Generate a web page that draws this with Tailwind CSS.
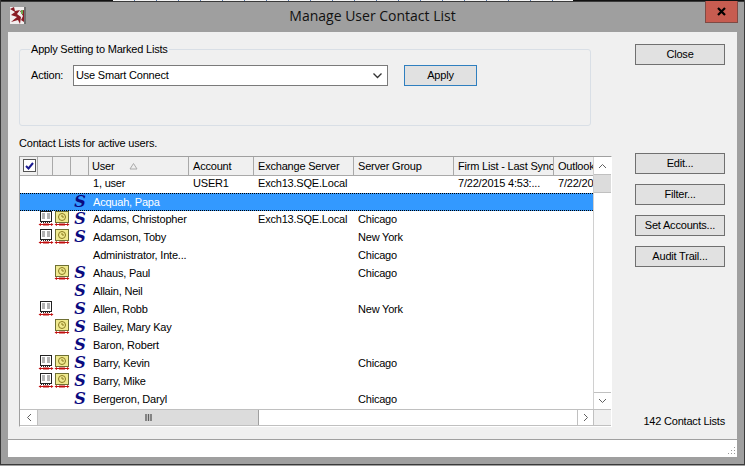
<!DOCTYPE html>
<html lang="en">
<head>
  <meta charset="UTF-8" />
  <title>Manage User Contact List</title>
  <script src="https://cdn.jsdelivr.net/npm/@tailwindcss/browser@4"></script>
</head>
<body class="w-[745px] h-[466px] overflow-hidden bg-[#9f9f9f] font-['Liberation_Sans',sans-serif] text-[11px] tracking-[-0.2px] text-black">
  <svg width="0" height="0" class="absolute">
    <symbol id="book" viewBox="0 0 16 16">
      <rect x="2.500" y="0.500" width="11" height="10" fill="#fff" stroke="#222"/>
      <path d="M4 3h3M4 5h3M4 7h3M9 3h3M9 5h3M9 7h3" stroke="#666"/>
      <path d="M3 11.500h10" stroke="#222" stroke-dasharray="1 1"/>
      <path d="M2 13.500h12M6 12v3M8 12v3M10 12v3" stroke="#c01010"/>
      <path d="M3 12l-2.500 1.500 2.500 1.500zM13 12l2.500 1.500-2.500 1.500z" fill="#c01010"/>
    </symbol>
    <symbol id="clock" viewBox="0 0 16 16">
      <rect x="1.500" y="0.500" width="13" height="11" fill="#f0ea90" stroke="#6f7034"/>
      <circle cx="8" cy="6" r="3.500" fill="none" stroke="#8a7a20"/>
      <path d="M8 4v2h2" stroke="#8a7a20" fill="none"/>
      <path d="M2 13.500h12M6 12v3M8 12v3M10 12v3" stroke="#c01010"/>
      <path d="M3 12l-2.500 1.500 2.500 1.500zM13 12l2.500 1.500-2.500 1.500z" fill="#c01010"/>
    </symbol>
  </svg>

  <!-- Title bar -->
  <div class="relative h-[32px] border-x border-[#3a3a3a] flex flex-col">
    <div class="h-[1px] bg-[#111] flex shrink-0">
      <div class="ml-[112px] w-[460px] bg-[repeating-linear-gradient(90deg,#f4f4f4_0,#f4f4f4_21px,#5577aa_21px,#5577aa_22px)]"></div>
    </div>
    <div class="h-[1px] bg-[#3a3a3a] shrink-0"></div>
    <div class="flex-1 flex items-center justify-center pb-[4px]">
      <div class="text-[14px] tracking-normal font-['Open_Sans',sans-serif] text-[#111]">Manage User Contact List</div>
    </div>
    <svg class="absolute left-[9px] top-[7px]" width="16" height="17" viewBox="0 0 16 17">
      <rect width="16" height="17" fill="#f2eeee"/>
      <path d="M0 2l5 3-4 3 6 2-6 5 7-2 2 4 1-7-4-3 3-4-5 1-1-4zM10 4l3 5-2 4 3 2V3z" fill="#8a1c24"/>
      <rect x="11" y="3" width="2" height="4" fill="#6fa84f"/>
      <rect x="14" y="0" width="2" height="17" fill="#6f6f6f"/>
    </svg>
    <div class="absolute left-[704px] top-[1px] w-[33px] h-[22px] bg-[#c75c50] border border-[#7e4a44] border-t-0 flex items-center justify-center">
      <svg width="9" height="9" viewBox="0 0 9 9"><path d="M1 1l7 7M8 1l-7 7" stroke="#000" stroke-width="2.200"/></svg>
    </div>
  </div>

  <!-- Client area -->
  <div class="border-x border-[#3a3a3a] h-[433px] border-b">
  <div class="ml-[7px] w-[729px] h-[425px] bg-[#f0f0f0] flex flex-col">
    <div class="h-[407px] flex pl-[11px] pt-[12px]">
      <!-- Left column -->
      <div class="w-[616px] flex flex-col">
        <fieldset class="w-[572px] h-[83px] -mt-[1px] border border-[#d9dfe6] rounded-[3px] pl-[11px] m-0">
          <legend class="px-[1px] -ml-[1px] leading-[13px]">Apply Setting to Marked Lists</legend>
          <div class="flex items-center mt-[9px]">
            <span class="w-[42px]">Action:</span>
            <div class="w-[315px] h-[21px] bg-white border border-[#7a7a7a] flex items-center justify-between pl-[2px] pr-[5px]">
              <span>Use Smart Connect</span>
              <svg width="9" height="6" viewBox="0 0 9 6"><path d="M0.500 0.500l4 4 4-4" stroke="#333" stroke-width="1.300" fill="none"/></svg>
            </div>
            <button class="ml-[16px] w-[73px] h-[21px] bg-[#e1e1e1] border border-[#2f7fbf]">Apply</button>
          </div>
        </fieldset>
        <div class="mt-[10px] leading-[14px]">Contact Lists for active users.</div>

        <!-- List view -->
        <div class="relative mt-[6px] w-[593px] h-[271px] border border-[#a0a0a0] border-r-white border-b-white bg-white overflow-hidden">
          <div class="w-[573px] h-[252px] overflow-hidden">
            <div class="grid grid-cols-[18px_15px_18px_18px_100px_65px_100px_100px_100px_39px] auto-rows-[18px] whitespace-nowrap">
              <!-- Header -->
              <div class="grid grid-cols-subgrid col-span-full h-[18px] bg-[#f0f0f0]">
                <div class="border-r border-b border-[#a9a9a9] flex items-center justify-center pl-[1px]"><span class="w-[13px] h-[13px] bg-white border border-[#555] flex items-center justify-center"><svg width="9" height="8" viewBox="0 0 9 8"><path d="M1 4l2.500 2.500L8 1" stroke="#1a1a90" stroke-width="2" fill="none"/></svg></span></div>
                <div class="border-r border-b border-[#a9a9a9]"></div>
                <div class="border-r border-b border-[#a9a9a9]"></div>
                <div class="border-r border-b border-[#a9a9a9]"></div>
                <div class="border-r border-b border-[#a9a9a9] pl-[3px] pt-[1px] flex items-center">User<svg class="ml-[15px]" width="9" height="7" viewBox="0 0 9 7"><path d="M4.500 0.500L8 6H1z" fill="none" stroke="#aaa"/></svg></div>
                <div class="border-r border-b border-[#a9a9a9] pl-[4px] pt-[1px] flex items-center">Account</div>
                <div class="border-r border-b border-[#a9a9a9] pl-[4px] pt-[1px] flex items-center">Exchange Server</div>
                <div class="border-r border-b border-[#a9a9a9] pl-[4px] pt-[1px] flex items-center">Server Group</div>
                <div class="border-r border-b border-[#a9a9a9] pl-[4px] pt-[1px] flex items-center overflow-hidden">Firm List - Last Sync</div>
                <div class="border-b border-[#a9a9a9] pl-[4px] pt-[1px] flex items-center overflow-hidden">Outlook</div>
              </div>
              <!-- Rows -->
              <div class="grid grid-cols-subgrid col-span-full items-center pb-[2px]">
                <span class="col-start-5 pl-[4px]">1, user</span><span class="pl-[4px]">USER1</span><span class="pl-[4px]">Exch13.SQE.Local</span><span></span><span class="pl-[4px]">7/22/2015 4:53:...</span><span class="pl-[4px] overflow-hidden">7/22/2015</span>
              </div>
              <div class="grid grid-cols-subgrid col-span-full items-center pb-[2px] bg-[#3399ff] text-white border-y border-dotted border-black">
                <span class="col-start-4 font-['DejaVu_Serif',serif] font-bold italic text-[16px] leading-[16px] text-[#0a0a80] text-center">S</span><span class="pl-[4px]">Acquah, Papa</span>
              </div>
              <div class="grid grid-cols-subgrid col-span-full items-center pb-[2px]">
                <svg class="col-start-2 justify-self-center" width="16" height="16"><use href="#book"/></svg><svg class="justify-self-center" width="16" height="16"><use href="#clock"/></svg><span class="font-['DejaVu_Serif',serif] font-bold italic text-[16px] leading-[16px] text-[#0a0a80] text-center">S</span><span class="pl-[4px]">Adams, Christopher</span><span></span><span class="pl-[4px]">Exch13.SQE.Local</span><span class="pl-[4px]">Chicago</span>
              </div>
              <div class="grid grid-cols-subgrid col-span-full items-center pb-[2px]">
                <svg class="col-start-2 justify-self-center" width="16" height="16"><use href="#book"/></svg><svg class="justify-self-center" width="16" height="16"><use href="#clock"/></svg><span class="font-['DejaVu_Serif',serif] font-bold italic text-[16px] leading-[16px] text-[#0a0a80] text-center">S</span><span class="pl-[4px]">Adamson, Toby</span><span></span><span></span><span class="pl-[4px]">New York</span>
              </div>
              <div class="grid grid-cols-subgrid col-span-full items-center pb-[2px]">
                <span class="col-start-5 pl-[4px]">Administrator, Inte...</span><span></span><span></span><span class="pl-[4px]">Chicago</span>
              </div>
              <div class="grid grid-cols-subgrid col-span-full items-center pb-[2px]">
                <svg class="col-start-3 justify-self-center" width="16" height="16"><use href="#clock"/></svg><span class="font-['DejaVu_Serif',serif] font-bold italic text-[16px] leading-[16px] text-[#0a0a80] text-center">S</span><span class="pl-[4px]">Ahaus, Paul</span><span></span><span></span><span class="pl-[4px]">Chicago</span>
              </div>
              <div class="grid grid-cols-subgrid col-span-full items-center pb-[2px]">
                <span class="col-start-4 font-['DejaVu_Serif',serif] font-bold italic text-[16px] leading-[16px] text-[#0a0a80] text-center">S</span><span class="pl-[4px]">Allain, Neil</span>
              </div>
              <div class="grid grid-cols-subgrid col-span-full items-center pb-[2px]">
                <svg class="col-start-2 justify-self-center" width="16" height="16"><use href="#book"/></svg><span class="col-start-4 font-['DejaVu_Serif',serif] font-bold italic text-[16px] leading-[16px] text-[#0a0a80] text-center">S</span><span class="pl-[4px]">Allen, Robb</span><span></span><span></span><span class="pl-[4px]">New York</span>
              </div>
              <div class="grid grid-cols-subgrid col-span-full items-center pb-[2px]">
                <svg class="col-start-3 justify-self-center" width="16" height="16"><use href="#clock"/></svg><span class="font-['DejaVu_Serif',serif] font-bold italic text-[16px] leading-[16px] text-[#0a0a80] text-center">S</span><span class="pl-[4px]">Bailey, Mary Kay</span>
              </div>
              <div class="grid grid-cols-subgrid col-span-full items-center pb-[2px]">
                <span class="col-start-4 font-['DejaVu_Serif',serif] font-bold italic text-[16px] leading-[16px] text-[#0a0a80] text-center">S</span><span class="pl-[4px]">Baron, Robert</span>
              </div>
              <div class="grid grid-cols-subgrid col-span-full items-center pb-[2px]">
                <svg class="col-start-2 justify-self-center" width="16" height="16"><use href="#book"/></svg><svg class="justify-self-center" width="16" height="16"><use href="#clock"/></svg><span class="font-['DejaVu_Serif',serif] font-bold italic text-[16px] leading-[16px] text-[#0a0a80] text-center">S</span><span class="pl-[4px]">Barry, Kevin</span><span></span><span></span><span class="pl-[4px]">Chicago</span>
              </div>
              <div class="grid grid-cols-subgrid col-span-full items-center pb-[2px]">
                <svg class="col-start-2 justify-self-center" width="16" height="16"><use href="#book"/></svg><svg class="justify-self-center" width="16" height="16"><use href="#clock"/></svg><span class="font-['DejaVu_Serif',serif] font-bold italic text-[16px] leading-[16px] text-[#0a0a80] text-center">S</span><span class="pl-[4px]">Barry, Mike</span>
              </div>
              <div class="grid grid-cols-subgrid col-span-full items-center pb-[2px]">
                <span class="col-start-4 font-['DejaVu_Serif',serif] font-bold italic text-[16px] leading-[16px] text-[#0a0a80] text-center">S</span><span class="pl-[4px]">Bergeron, Daryl</span><span></span><span></span><span class="pl-[4px]">Chicago</span>
              </div>
            </div>
          </div>
          <!-- Vertical scrollbar -->
          <div class="absolute left-[573px] top-0 w-[18px] h-[252px] flex flex-col border-l border-[#d0d0d0] bg-white">
            <div class="h-[18px] flex items-center justify-center border-b border-[#c0c0c0]"><svg width="9" height="6" viewBox="0 0 9 6"><path d="M1 5l3.500-3.500L8 5" stroke="#606060" fill="none"/></svg></div>
            <div class="h-[18px] bg-[#dcdcdc] border-b border-[#c0c0c0]"></div>
            <div class="flex-1"></div>
            <div class="h-[17px] flex items-center justify-center border-t border-[#c0c0c0]"><svg width="9" height="6" viewBox="0 0 9 6"><path d="M1 1l3.500 3.500L8 1" stroke="#606060" fill="none"/></svg></div>
          </div>
          <!-- Horizontal scrollbar -->
          <div class="absolute left-0 top-[252px] w-[591px] h-[17px] flex border-y border-[#c0c0c0]">
            <div class="w-[18px] bg-white flex items-center justify-center border-r border-[#c0c0c0]"><svg width="6" height="9" viewBox="0 0 6 9"><path d="M5 1L1.500 4.500 5 8" stroke="#606060" fill="none"/></svg></div>
            <div class="w-[221px] pl-[2px] bg-[#dcdcdc] border-r border-[#a0a0a0] flex items-center justify-center"><svg width="8" height="7" viewBox="0 0 8 7"><path d="M1 0v7M3.500 0v7M6 0v7" stroke="#606060" stroke-width="1.400"/></svg></div>
            <div class="w-[318px] bg-white"></div>
            <div class="w-[17px] bg-white flex items-center justify-center border-x border-[#c0c0c0]"><svg width="6" height="9" viewBox="0 0 6 9"><path d="M1 1l3.500 3.500L1 8" stroke="#606060" fill="none"/></svg></div>
            <div class="flex-1 bg-[#f0f0f0]"></div>
          </div>
        </div>
      </div>

      <!-- Right column -->
      <div class="w-[90px] flex flex-col">
        <button class="h-[21px] bg-[#e1e1e1] border border-[#707070]">Close</button>
        <button class="mt-[88px] h-[21px] bg-[#e1e1e1] border border-[#707070]">Edit...</button>
        <button class="mt-[10px] h-[21px] bg-[#e1e1e1] border border-[#707070]">Filter...</button>
        <button class="mt-[10px] h-[21px] bg-[#e1e1e1] border border-[#707070]">Set Accounts...</button>
        <button class="mt-[10px] h-[21px] bg-[#e1e1e1] border border-[#707070]">Audit Trail...</button>
        <div class="mt-auto mb-[11px] text-right leading-[14px] whitespace-nowrap">142 Contact Lists</div>
      </div>
    </div>

    <!-- Status bar -->
    <div class="h-[18px] bg-white border-t border-[#a0a0a0] flex justify-end items-end">
      <svg class="mr-[1px] mb-[1px]" width="10" height="10" viewBox="0 0 10 10"><path d="M8 1h1v1H8zM8 4h1v1H8zM5 4h1v1H5zM8 7h1v1H8zM5 7h1v1H5zM2 7h1v1H2z" fill="#999"/></svg>
    </div>
  </div>
  </div>
</body>
</html>
